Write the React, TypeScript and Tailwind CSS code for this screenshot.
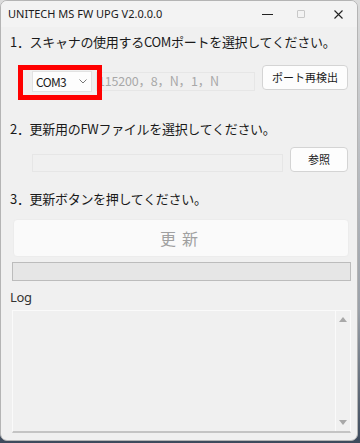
// Firmware update tool window (UNITECH MS FW UPG)
const jp = "font-['Noto_Sans_CJK_JP',sans-serif]";

const App = () => {
  return (
    <div className="w-[360px] h-[443px] bg-[linear-gradient(180deg,#dcdcdc_0%,#9aa0a8_70%,#3d4a5c_100%)]">
      <div className="w-[358px] h-[441px] bg-[#f0f0f0] border border-[#b4b4b4] rounded-[7px] overflow-hidden flex flex-col">
        {/* Title bar */}
        <div className="h-[26px] shrink-0 flex items-center bg-[#f3f3f3] pl-[7px]">
          <span className="text-[11px] text-[#1a1a1a] font-['Noto_Sans',sans-serif]">
            UNITECH MS FW UPG V2.0.0.0
          </span>
          <div className="ml-auto flex items-center h-full">
            <div className="w-[36px] h-full flex items-center justify-center pl-[4px]">
              <div className="w-[11px] h-px bg-[#222]" />
            </div>
            <div className="w-[36px] h-full flex items-center justify-center">
              <div className="w-[8px] h-[8px] border border-[#c8c8c8] rounded-[1px]" />
            </div>
            <div className="w-[38px] h-full flex items-center justify-center">
              <svg width="9" height="9" viewBox="0 0 9 9">
                <path d="M0.5 0.5 L8.5 8.5 M8.5 0.5 L0.5 8.5" stroke="#222" strokeWidth="1.1" />
              </svg>
            </div>
          </div>
        </div>

        {/* Content */}
        <div className={`flex-1 flex flex-col pl-[9px] pr-[9px] text-[#1a1a1a] ${jp}`}>
          <div className="mt-[7px] h-[16px] leading-[16px] text-[13px] tracking-[-0.3px]">
            1．スキャナの使用するCOMポートを選択してください。
          </div>

          {/* Port row */}
          <div className="relative mt-[15px] h-[35px] flex items-start">
            <div className="mt-[6px] ml-[22px] w-[60px] h-[21px] bg-[#fdfdfd] border border-[#e2e2e2] flex items-center pl-[3px] pr-[4px]">
              <span className="text-[12px] leading-none tracking-[-0.6px]">COM3</span>
              <svg className="ml-auto" width="8" height="5" viewBox="0 0 8 5">
                <path d="M0.5 0.5 L4 4 L7.5 0.5" stroke="#777" strokeWidth="1" fill="none" />
              </svg>
            </div>
            <div className="mt-[7px] ml-[4px] w-[159px] h-[19px] border border-[#e6e6e6] flex items-center pl-[1px]">
              <span className="text-[12.5px] leading-none text-[#a8a8a8] tracking-[-0.2px]">
                115200，8，N，1，N
              </span>
            </div>
            <button className="ml-auto w-[86px] h-[25px] bg-[#fdfdfd] border border-[#d4d4d4] rounded-[4px] text-[11px] leading-none">
              ポート再検出
            </button>
            <div className="absolute left-[8px] top-0 w-[84px] h-[35px] border-[5px] border-[#ff0000]" />
          </div>

          <div className="mt-[21px] h-[16px] leading-[16px] text-[13px] tracking-[-0.3px]">
            2．更新用のFWファイルを選択してください。
          </div>

          {/* File row */}
          <div className="mt-[10px] h-[25px] flex items-end">
            <div className="ml-[22px] w-[251px] h-[18px] border border-[#e6e6e6]" />
            <button className="ml-auto w-[58px] h-[25px] bg-[#fdfdfd] border border-[#d4d4d4] rounded-[4px] text-[11px] leading-none">
              参照
            </button>
          </div>

          <div className="mt-[19px] h-[16px] leading-[16px] text-[13px] tracking-[-0.3px]">
            3．更新ボタンを押してください。
          </div>

          <button className="mt-[12px] ml-[3px] w-[336px] h-[38px] bg-[#fafafa] border border-[#ececec] rounded-[4px] text-[16px] text-[#a0a0a0] tracking-[6px] pl-[2px]">
            更新
          </button>

          <div className="mt-[5px] ml-[2px] w-[339px] h-[19px] bg-[#e6e6e6] border border-[#bcbcbc]" />

          <div className="mt-[8px] h-[16px] leading-[16px] text-[13px] font-['Noto_Sans',sans-serif] text-[#333] tracking-[-0.3px]">
            Log
          </div>

          {/* Log box */}
          <div className="mt-[5px] ml-[2px] w-[339px] h-[123px] border border-[#fafafa] border-b-2 border-b-[#c4c4c4] flex">
            <div className="flex-1" />
            <div className="w-[15px] border-l border-[#fafafa] flex flex-col items-center justify-between py-[6px]">
              <svg width="8" height="5" viewBox="0 0 8 5">
                <path d="M0 5 L4 0 L8 5 Z" fill="#a8a8a8" />
              </svg>
              <svg width="8" height="5" viewBox="0 0 8 5">
                <path d="M0 0 L8 0 L4 5 Z" fill="#a8a8a8" />
              </svg>
            </div>
          </div>
        </div>
      </div>
    </div>
  );
};

export default App;
